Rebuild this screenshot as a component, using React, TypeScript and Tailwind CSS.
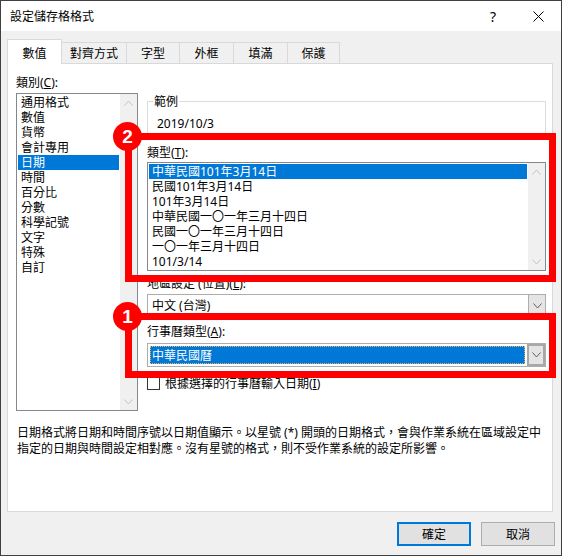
import React from 'react';

const FONT = {
  fontFamily: '"Noto Sans", "Noto Sans CJK TC", sans-serif',
};

const categories = [
  '通用格式',
  '數值',
  '貨幣',
  '會計專用',
  '日期',
  '時間',
  '百分比',
  '分數',
  '科學記號',
  '文字',
  '特殊',
  '自訂',
];

const types = [
  '中華民國101年3月14日',
  '民國101年3月14日',
  '101年3月14日',
  '中華民國一〇一年三月十四日',
  '民國一〇一年三月十四日',
  '一〇一年三月十四日',
  '101/3/14',
];

const tabs = ['數值', '對齊方式', '字型', '外框', '填滿', '保護'];
const tabWidths = ['w-[55px]', 'w-[65px]', 'w-[53px]', 'w-[54px]', 'w-[54px]', 'w-[52px]'];

const Chevron = ({ up = false, color = '#c2c2c2' }: { up?: boolean; color?: string }) => (
  <svg width="9" height="6" viewBox="0 0 9 6">
    <polyline
      points={up ? '0.5,5.5 4.5,1 8.5,5.5' : '0.5,0.5 4.5,5 8.5,0.5'}
      fill="none"
      stroke={color}
      strokeWidth="1"
    />
  </svg>
);

const ScrollBar = () => (
  <div className="flex w-[17px] flex-col justify-between bg-[#f0f0f0]">
    <div className="flex h-[17px] items-center justify-center">
      <Chevron up />
    </div>
    <div className="flex h-[17px] items-center justify-center">
      <Chevron />
    </div>
  </div>
);

const Badge = ({ n, className }: { n: string; className: string }) => (
  <div
    className={`absolute flex h-[29px] w-[29px] items-center justify-center rounded-full bg-[#ff0000] text-[19px] font-bold leading-none text-white ${className}`}
    style={{ fontFamily: '"Liberation Sans", Arial, sans-serif' }}
  >
    {n}
  </div>
);

export default function App() {
  return (
    <div
      className="relative flex h-[556px] w-[562px] flex-col border border-[#404040] bg-[#f0f0f0] text-[12px] text-black"
      style={FONT}
    >
      {/* TITLE BAR */}
      <div className="flex h-[30px] items-center bg-white pl-[9px]">
        <span className="leading-[15px]">設定儲存格格式</span>
        <div className="ml-auto flex h-full">
          <div className="flex w-[46px] items-center justify-center text-[14px]">?</div>
          <div className="flex w-[45px] items-center justify-center">
            <svg width="11" height="11" viewBox="0 0 11 11">
              <path d="M0.5 0.5 L10.5 10.5 M10.5 0.5 L0.5 10.5" stroke="#000" strokeWidth="1" />
            </svg>
          </div>
        </div>
      </div>

      {/* TABS */}
      <div className="ml-[6px] mt-[8px] flex h-[24px] items-end">
        {tabs.map((t, i) =>
          i === 0 ? (
            <div
              key={t}
              className={`relative z-10 -mb-px flex h-[25px] items-center justify-center border border-b-0 border-[#d9d9d9] bg-white pt-[2px] leading-[15px] ${tabWidths[i]}`}
            >
              {t}
            </div>
          ) : (
            <div
              key={t}
              className={`flex h-[21px] items-center justify-center border border-b-0 border-l-0 border-[#d9d9d9] bg-[#f0f0f0] leading-[15px] ${tabWidths[i]}`}
            >
              {t}
            </div>
          )
        )}
      </div>

      {/* PANEL */}
      <div className="ml-[6px] h-[449px] w-[546px] border border-[#d9d9d9] bg-white">
        <div className="flex pl-[8px] pt-[11px]">
          {/* CATEGORY */}
          <div className="w-[122px]">
            <div className="h-[15px] leading-[15px]">
              類別(<u>C</u>):
            </div>
            <div className="mt-[3px] flex h-[318px] border border-[#828790]">
              <div className="flex-1 px-px pt-px">
                {categories.map((c) => (
                  <div
                    key={c}
                    className={`h-[15px] pl-[3px] leading-[15px] ${
                      c === '日期' ? 'bg-[#0078d7] text-white' : ''
                    }`}
                  >
                    {c}
                  </div>
                ))}
              </div>
              <ScrollBar />
            </div>
          </div>

          {/* RIGHT COLUMN */}
          <div className="ml-[9px] w-[399px]">
            <div className="relative mt-[26px] h-[37px] w-[399px] border border-b-0 border-[#dcdcdc]">
              <span className="absolute -top-[8px] left-[5px] bg-white px-px leading-[15px]">範例</span>
              <div className="pl-[9px] pt-[14px] leading-[15px]">2019/10/3</div>
            </div>

            <div className="mt-[7px] h-[15px] leading-[15px]">
              類型(<u>T</u>):
            </div>
            <div className="mt-[2px] flex h-[109px] border border-[#828790]">
              <div className="flex-1 px-px pt-px">
                {types.map((t, i) => (
                  <div
                    key={t}
                    className={`h-[15px] pl-[3px] leading-[15px] ${
                      i === 0 ? 'bg-[#0078d7] text-white' : ''
                    }`}
                  >
                    {t}
                  </div>
                ))}
              </div>
              <ScrollBar />
            </div>

            <div className="mt-[5px] h-[15px] leading-[15px]">
              地區設定 (位置)(<u>L</u>):
            </div>
            <div className="mt-[3px] flex h-[23px] border border-[#adadad] bg-white">
              <div className="flex flex-1 items-center pl-[4px] leading-[15px]">中文 (台灣)</div>
              <div className="flex w-[17px] items-center justify-center border-l border-[#adadad] bg-[#e5e5e5]">
                <Chevron color="#606060" />
              </div>
            </div>

            <div className="mt-[7px] h-[15px] leading-[15px]">
              行事曆類型(<u>A</u>):
            </div>
            <div className="mt-[4px] flex h-[24px] border border-[#adadad] bg-white">
              <div className="flex flex-1 p-[2px]">
                <div className="flex flex-1 items-center bg-[#0078d7] pl-[2px] leading-[15px] text-white outline-1 -outline-offset-1 outline-dotted outline-[#f3b35a]">
                  中華民國曆
                </div>
              </div>
              <div className="flex w-[18px] items-center justify-center border-2 border-[#a8a8a8] bg-[#e5e5e5]">
                <Chevron color="#606060" />
              </div>
            </div>

            <div className="mt-[9px] flex items-center">
              <div className="h-[13px] w-[13px] border border-[#333333] bg-white" />
              <span className="ml-[5px] leading-[15px]">
                根據選擇的行事曆輸入日期(<u>I</u>)
              </span>
            </div>
          </div>
        </div>

        {/* DESCRIPTION */}
        <div className="mt-[14px] pl-[9px] pr-[4px] leading-[16px]">
          <div>日期格式將日期和時間序號以日期值顯示。以星號 (*) 開頭的日期格式，會與作業系統在區域設定中</div>
          <div>指定的日期與時間設定相對應。沒有星號的格式，則不受作業系統的設定所影響。</div>
        </div>
      </div>

      {/* BUTTONS */}
      <div className="mt-[10px] flex justify-end gap-[10px] pr-[6px]">
        <button className="flex h-[24px] w-[74px] items-center justify-center border-2 border-[#0078d7] bg-[#e1e1e1] leading-[15px]">
          確定
        </button>
        <button className="flex h-[24px] w-[74px] items-center justify-center border border-[#adadad] bg-[#e1e1e1] leading-[15px]">
          取消
        </button>
      </div>

      {/* ANNOTATIONS */}
      <div className="absolute left-[124px] top-[132px] h-[149px] w-[431px] border-[7px] border-[#ff0000]" />
      <div className="absolute left-[124px] top-[312px] h-[65px] w-[431px] border-[7px] border-[#ff0000]" />
      <Badge n="2" className="left-[112px] top-[121px]" />
      <Badge n="1" className="left-[112px] top-[301px]" />
    </div>
  );
}
